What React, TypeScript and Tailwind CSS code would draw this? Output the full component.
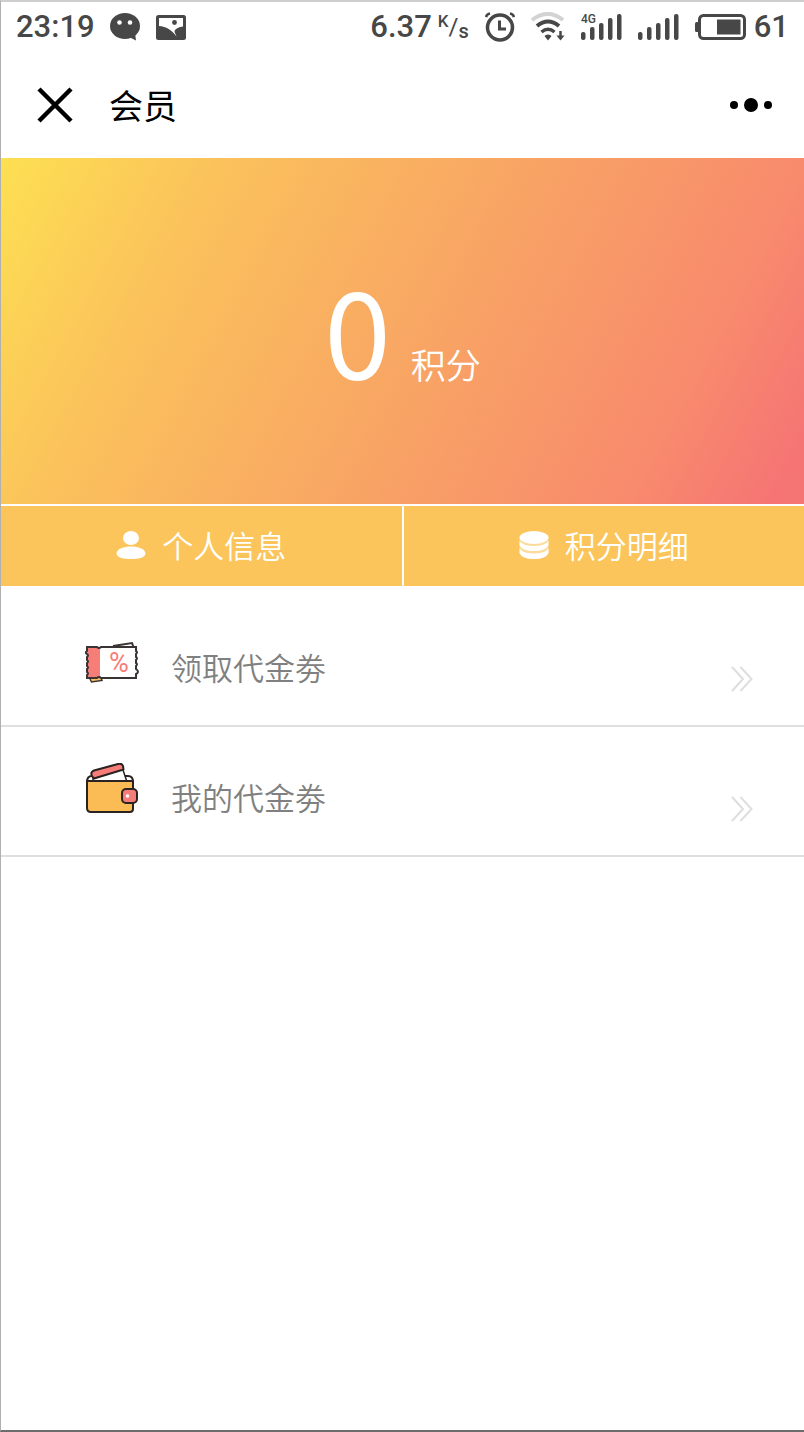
import type { ReactNode } from "react";

function ChatIcon() {
  return (
    <svg width="31" height="28" viewBox="0 0 31 28" aria-hidden="true">
      <ellipse cx="15" cy="13" rx="15" ry="13" fill="#474747" />
      <path d="M19 24 L25 20 L26 27.500 Z" fill="#474747" />
      <circle cx="9.500" cy="9.500" r="2.300" fill="#fff" />
      <circle cx="20" cy="9.500" r="2.300" fill="#fff" />
    </svg>
  );
}

function PictureIcon() {
  return (
    <svg width="30" height="25" viewBox="0 0 30 25" aria-hidden="true">
      <rect width="30" height="25" rx="2.500" fill="#474747" />
      <path
        d="M3 3 H27 V11.500 C23 12 19.500 13.500 18.500 16 C18.500 18 20 19.500 20.500 21.500 C16 15 10 11.500 3 11 Z"
        fill="#fff"
      />
      <circle cx="18.500" cy="7.500" r="2.400" fill="#474747" />
    </svg>
  );
}

function AlarmIcon() {
  return (
    <svg
      width="30"
      height="30"
      viewBox="0 0 30 30"
      fill="none"
      stroke="#474747"
      aria-hidden="true"
    >
      <circle cx="15" cy="15.500" r="12.500" strokeWidth="3.500" />
      <path d="M14.500 8.500 V17 H21" strokeWidth="3" />
      <path d="M1 5 Q2 2 5 1.500 M29 5 Q28 2 25 1.500" strokeWidth="2.500" />
    </svg>
  );
}

function WifiIcon() {
  return (
    <svg width="34" height="30" viewBox="0 0 34 30" fill="none" aria-hidden="true">
      <path d="M1 8 Q17 -4 32 8" stroke="#d3d3d3" strokeWidth="4" />
      <path d="M6 14 Q17 5 28 14" stroke="#474747" strokeWidth="4" />
      <path d="M10.500 20 Q17 14.500 23.500 20" stroke="#474747" strokeWidth="3.500" />
      <path d="M17 22.500 Q19.500 22.500 20.500 24 L17 28.500 L13.500 24 Q14.500 22.500 17 22.500 Z" fill="#474747" />
      <path d="M29.500 19 V26" stroke="#474747" strokeWidth="2.500" />
      <path d="M25.500 23.500 H33.500 L29.500 28.500 Z" fill="#474747" />
    </svg>
  );
}

function SignalIcon({ label }: { label?: string }) {
  return (
    <svg width="41" height="28" viewBox="0 0 41 28" fill="#474747" aria-hidden="true">
      {label && (
        <text x="0" y="10" fontSize="12" fontWeight="500" fontFamily="Roboto, sans-serif">
          {label}
        </text>
      )}
      <rect x="0" y="19" width="4.500" height="8" rx="2" />
      <rect x="9" y="14" width="4.500" height="13" rx="2" />
      <rect x="18" y="10" width="4.500" height="17" rx="2" />
      <rect x="27" y="5" width="4.500" height="22" rx="2" />
      <rect x="36" y="1" width="4.500" height="26" rx="2" />
    </svg>
  );
}

function BatteryIcon() {
  return (
    <svg width="51" height="26" viewBox="0 0 51 26" aria-hidden="true">
      <rect x="4.500" y="1.500" width="45" height="23" rx="4" fill="none" stroke="#474747" strokeWidth="3" />
      <rect x="0" y="8" width="4" height="10" rx="1.500" fill="#474747" />
      <rect x="22" y="5.500" width="23.500" height="15" fill="#474747" />
    </svg>
  );
}

function UserIcon() {
  return (
    <svg width="30" height="28" viewBox="0 0 30 28" fill="#fff" aria-hidden="true">
      <ellipse cx="15" cy="7" rx="8" ry="7" />
      <path d="M0.500 22.500 C1 17.500 8 15.500 15 15.500 S29 17.500 29.500 22.500 C29 27 22 28 15 28 S1 27 0.500 22.500 Z" />
    </svg>
  );
}

function CoinsIcon() {
  return (
    <svg width="30" height="28" viewBox="0 0 30 28" fill="#fff" aria-hidden="true">
      <path d="M0.500 7 H29.500 V22 Q27 28 15 28 T0.500 22 Z" opacity="0.400" />
      <ellipse cx="15" cy="6.500" rx="14.500" ry="6.500" />
      <path d="M0.500 10 Q4 15 15 15 T29.500 10 V14 Q27 20 15 20 T0.500 14 Z" />
      <path d="M0.500 17.500 Q4 22.500 15 22.500 T29.500 17.500 V22 Q27 28 15 28 T0.500 22 Z" />
    </svg>
  );
}

function CouponIcon() {
  return (
    <svg width="54" height="48" viewBox="0 -7 54 48" aria-hidden="true">
      <path d="M28 4 L47 1 L48.500 5" fill="#fff" stroke="#3a3333" strokeWidth="2" />
      <path d="M5 37 L6.500 40 L17 38.500 L16 36" fill="#f9bd5c" stroke="#3a3333" strokeWidth="1.500" />
      <path d="M2 5 H15 V36 H2 Z" fill="#f77d79" />
      <path
        d="M2 5 H12 Q14 7 16 5 H51 V9 Q53 10 51 12 V15 Q53 16 51 18 V21 Q53 22 51 24 V27 Q55 30 51 32 V36 H16 Q14 34 12 36 H2 V33 Q4 31.500 2 30 V27 Q4 25.500 2 24 V21 Q4 19.500 2 18 V15 Q4 13.500 2 12 Q-0.500 10.500 2 9 Z"
        fill="none"
        stroke="#3a3333"
        strokeWidth="2"
      />
      <text x="24" y="30" fontSize="27" fill="#f77d79" fontFamily="Roboto, sans-serif">
        %
      </text>
    </svg>
  );
}

function WalletIcon() {
  return (
    <svg
      width="54"
      height="52"
      viewBox="0 0 54 52"
      stroke="#2b2222"
      strokeWidth="2"
      strokeLinejoin="round"
      aria-hidden="true"
    >
      <path d="M2 19 Q2 13 7 13 H43 Q48 13 48 19" fill="#fff" />
      <path d="M8 19 V13 L37 4 L42 19" fill="#fff" strokeWidth="1.500" />
      <path d="M7 13 Q5 9 9 7.500 L33 1 Q37 0 38 3 L38.500 6.500 L9 15.500 Z" fill="#f77d79" />
      <path d="M2 18 H48 V46 Q48 49 45 49 H6 Q2 49 2 45 Z" fill="#fbbb55" />
      <rect x="37" y="26" width="15" height="14" rx="4" fill="#f77d79" />
      <circle cx="42.500" cy="33" r="1.800" fill="#fff" stroke="none" />
    </svg>
  );
}

function DoubleChevron() {
  return (
    <svg
      width="22"
      height="26"
      viewBox="0 0 22 26"
      fill="none"
      stroke="#dedede"
      strokeWidth="2"
      aria-hidden="true"
    >
      <path d="M1 1 L12 13 L1 25 M9.500 1 L20.500 13 L9.500 25" />
    </svg>
  );
}

function Tab({ icon, label }: { icon: ReactNode; label: string }) {
  return (
    <button className="flex h-20 flex-1 items-center justify-center gap-4 bg-[#fbc55b] pb-0.5 text-[31px] leading-10 font-[350] text-white">
      {icon}
      {label}
    </button>
  );
}

function MenuRow({ icon, label }: { icon: ReactNode; label: string }) {
  return (
    <li className="border-b-2 border-[#dfdfdf]">
      <a href="#" className="flex h-32 items-center pr-[51px] pl-[84px]">
        <span className="mr-8 -mt-1">{icon}</span>
        <span className="mt-3 flex-1 text-[31px] leading-10 font-[350] text-[#808080]">
          {label}
        </span>
        <span className="mt-9">
          <DoubleChevron />
        </span>
      </a>
    </li>
  );
}

export default function App() {
  return (
    <div className="flex min-h-screen flex-col border-t-2 border-b-2 border-l border-t-[#cfcfcf] border-b-[#6c6c6c] border-l-[#b0b0b0] bg-white font-['Noto_Sans_CJK_SC',sans-serif]">
      <div className="flex h-[50px] items-center justify-between px-[15px] font-['Roboto',sans-serif] text-[31px] font-medium text-[#474747]">
        <div className="flex items-center gap-[15px]">
          <span>23:19</span>
          <ChatIcon />
          <PictureIcon />
        </div>
        <div className="flex items-center gap-4">
          <span className="flex items-center gap-1.5">
            6.37
            <span className="flex items-center leading-none">
              <span className="mb-3 text-[17px]">K</span>
              <span className="text-[24px] font-normal">/</span>
              <span className="mt-2 text-[20px]">s</span>
            </span>
          </span>
          <AlarmIcon />
          <WifiIcon />
          <SignalIcon label="4G" />
          <SignalIcon />
          <BatteryIcon />
          <span className="-ml-2">61</span>
        </div>
      </div>

      <header className="flex h-[106px] items-center pr-8 pl-9">
        <button aria-label="关闭">
          <svg width="36" height="36" viewBox="0 0 36 36" stroke="#000" strokeWidth="4.500">
            <path d="M2 2 L34 34 M34 2 L2 34" />
          </svg>
        </button>
        <h1 className="ml-9 flex-1 text-[34px] leading-10 text-black">会员</h1>
        <button aria-label="更多">
          <svg width="42" height="14" viewBox="0 0 42 14">
            <circle cx="4" cy="7" r="4" />
            <circle cx="21" cy="7" r="7" />
            <circle cx="38" cy="7" r="4" />
          </svg>
        </button>
      </header>

      <section className="flex h-[346px] items-center justify-center bg-[linear-gradient(118deg,#fde052_0%,#fbc25b_22%,#f8a265_56%,#f88a6d_82%,#f57474_97%)] pb-1 text-white">
        <p className="flex items-baseline gap-5">
          <span className="text-[120px] leading-none font-normal">0</span>
          <span className="text-[35px] font-[350]">积分</span>
        </p>
      </section>

      <nav className="mt-0.5 flex gap-0.5">
        <Tab icon={<UserIcon />} label="个人信息" />
        <Tab icon={<CoinsIcon />} label="积分明细" />
      </nav>

      <ul className="pt-[11px]">
        <MenuRow icon={<CouponIcon />} label="领取代金劵" />
        <MenuRow icon={<WalletIcon />} label="我的代金劵" />
      </ul>
    </div>
  );
}
